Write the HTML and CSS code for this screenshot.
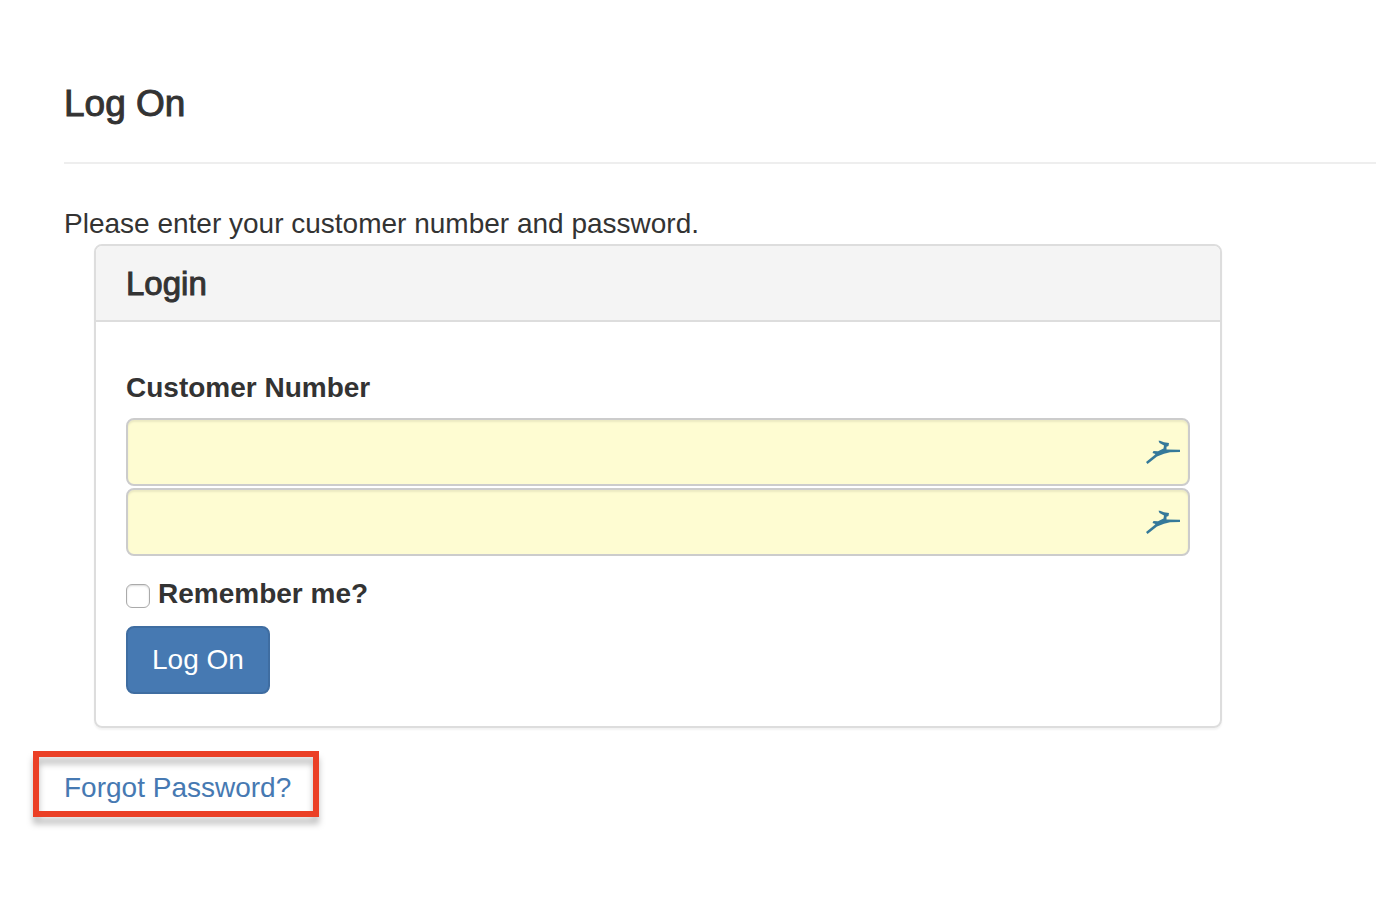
FILE: index.html
```
<!DOCTYPE html>
<html lang="en">
<head>
    <meta charset="UTF-8">
    <meta name="viewport" content="width=device-width, initial-scale=1.0">
    <title>Log On</title>
    <link rel="stylesheet" href="styles.css">
</head>
<body>
    <main class="page">
        <h1 class="page-title">Log On</h1>
        <hr>
        <p class="intro">Please enter your customer number and password.</p>

        <!-- Login Form -->
        <form class="panel" onsubmit="return false">
            <div class="panel-heading">
                <h2>Login</h2>
            </div>
            <div class="panel-body">
                <label class="field-label" for="customerNumber">Customer Number</label>
                <div class="field">
                    <input class="form-control" type="text" id="customerNumber">
                    <svg class="field-icon" viewBox="0 0 34 24" aria-hidden="true">
                        <path d="M0 22 L8 15.500 L9.500 14 L6.500 13 L7.500 11 L12 11.200 L17.500 8.500 L18 5.500 L13.500 3 L12.500 0.800 L14 0.800 L18 2.200 L23 3 L22.500 6 L20.500 6.800 L20.500 9.500 L34 9.700 L34 12 L24 12.200 L18 13.800 L11 16.500 L1.500 24 Z"/>
                    </svg>
                </div>
                <div class="field">
                    <input class="form-control" type="password" id="password" aria-label="Password">
                    <svg class="field-icon" viewBox="0 0 34 24" aria-hidden="true">
                        <path d="M0 22 L8 15.500 L9.500 14 L6.500 13 L7.500 11 L12 11.200 L17.500 8.500 L18 5.500 L13.500 3 L12.500 0.800 L14 0.800 L18 2.200 L23 3 L22.500 6 L20.500 6.800 L20.500 9.500 L34 9.700 L34 12 L24 12.200 L18 13.800 L11 16.500 L1.500 24 Z"/>
                    </svg>
                </div>
                <div class="remember">
                    <input type="checkbox" id="rememberMe">
                    <label for="rememberMe">Remember me?</label>
                </div>
                <button class="btn" type="submit">Log On</button>
            </div>
        </form>

        <a class="forgot" href="#">Forgot Password?</a>
    </main>
</body>
</html>
```

FILE: styles.css
```
:root {
    --primary: #4679b2;
    --primary-dark: #3f6da1;
    --text: #333;
    --border: #ddd;
    --highlight: #eb4026;
    --icon: #35799a;
    --border-radius: 8px;
}

* {
    box-sizing: border-box;
}

body {
    margin: 0;
    font-family: "Liberation Sans", Arial, sans-serif;
    font-size: 28px;
    line-height: 40px;
    color: var(--text);
    background: white;
}

.page {
    padding: 84px 0 40px 64px;
}

h1, h2 {
    margin: 0;
    font-weight: 400;
    -webkit-text-stroke: 1px var(--text);
}

.page-title {
    font-size: 37px;
}

hr {
    height: 2px;
    margin: 38px 0 40px;
    border: none;
    background: #eee;
}

.intro {
    margin: 0;
}

/* Login Form */
.panel {
    max-width: 1128px;
    margin: 0 30px;
    border: 2px solid var(--border);
    border-radius: var(--border-radius);
    box-shadow: 0 2px 2px rgba(0, 0, 0, 0.05);
}

.panel-heading {
    padding: 18px 30px 16px;
    background: #f4f4f4;
    border-bottom: 2px solid var(--border);
    border-radius: 6px 6px 0 0;
}

.panel-heading h2 {
    font-size: 33px;
}

.panel-body {
    padding: 46px 30px 32px;
}

.field-label {
    display: block;
    margin-bottom: 10px;
    font-weight: 700;
}

.field {
    position: relative;
    margin-bottom: 2px;
}

.form-control {
    display: block;
    width: 100%;
    height: 68px;
    padding: 12px 56px 12px 24px;
    font: inherit;
    color: var(--text);
    background: #fefcd2;
    border: 2px solid #ccc;
    border-radius: var(--border-radius);
    box-shadow: inset 0 2px 2px rgba(0, 0, 0, 0.08);
}

.field-icon {
    position: absolute;
    top: 22px;
    right: 10px;
    width: 34px;
    height: 24px;
    fill: var(--icon);
    pointer-events: none;
}

.remember {
    display: flex;
    align-items: center;
    gap: 8px;
    margin: 18px 0 12px;
    font-weight: 700;
}

.remember input {
    appearance: none;
    width: 24px;
    height: 24px;
    margin: 4px 0 0;
    background: white;
    border: 1px solid #aaa;
    border-radius: 6px;
    box-shadow: inset 0 1px 2px rgba(0, 0, 0, 0.15);
}

.remember input:checked {
    background: var(--primary);
}

.btn {
    display: block;
    padding: 12px 24px;
    font: inherit;
    color: white;
    background: var(--primary);
    border: 2px solid var(--primary-dark);
    border-radius: var(--border-radius);
    cursor: pointer;
}

.btn:hover {
    background: var(--primary-dark);
}

.forgot {
    display: inline-block;
    position: relative;
    margin-top: 40px;
    color: var(--primary);
    text-decoration: none;
}

/* Red callout frame round the link */
.forgot::after {
    content: "";
    position: absolute;
    inset: -17px -28px -9px -31px;
    border: 6px solid var(--highlight);
    filter: drop-shadow(0 7px 3px rgba(0, 0, 0, 0.25));
    pointer-events: none;
}
```
